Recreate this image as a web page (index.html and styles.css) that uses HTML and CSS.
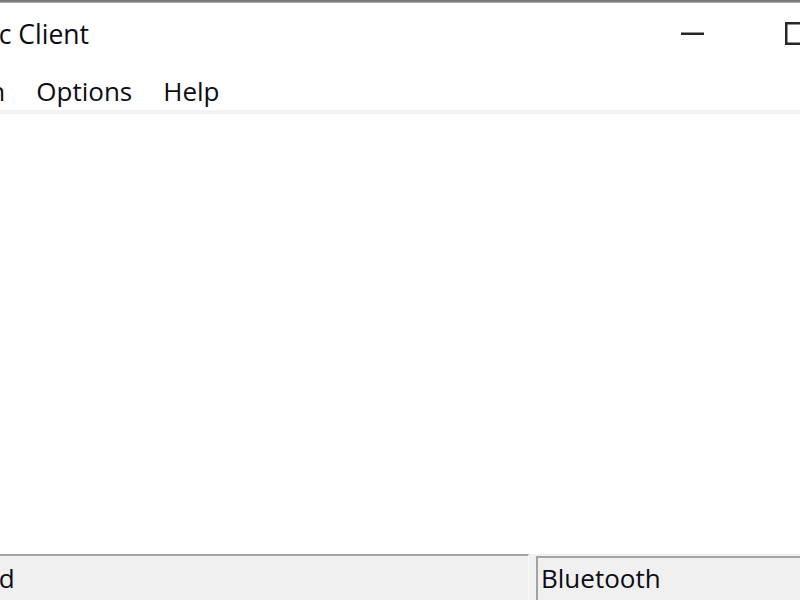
FILE: index.html
```html
<!DOCTYPE html>
<html lang="en">
<head>
  <meta charset="UTF-8">
  <title>Generic Client</title>
  <link rel="stylesheet" href="styles.css">
</head>
<body>

  <div class="window">
    <div class="frame-top"></div>

    <!-- Caption: title on the left, window buttons on the right -->
    <div class="titlebar">
      <div class="title"><span>Generic Client</span></div>
      <div class="caption-buttons">
        <div class="caption-btn">
          <svg width="23" height="23" viewBox="0 0 23 23"><rect x="0" y="10.5" width="23" height="2.5" fill="#262626"/></svg>
        </div>
        <div class="caption-btn">
          <svg width="23" height="23" viewBox="0 0 23 23"><rect x="1.25" y="1.25" width="20.5" height="20.5" fill="none" stroke="#262626" stroke-width="2.5"/></svg>
        </div>
        <div class="caption-btn">
          <svg width="23" height="23" viewBox="0 0 23 23"><path d="M1 1L22 22M22 1L1 22" stroke="#262626" stroke-width="2.5"/></svg>
        </div>
      </div>
    </div>

    <div class="menubar">
      <div class="menu-items">
        <span class="menu-item">File</span>
        <span class="menu-item">Connection</span>
        <span class="menu-item">Options</span>
        <span class="menu-item">Help</span>
      </div>
    </div>

    <div class="client"></div>

    <div class="statusbar">
      <div class="status-panel status-main"><span class="status-text">Disconnected</span></div>
      <div class="status-panel status-transport">Bluetooth</div>
    </div>
  </div>

</body>
</html>
```

FILE: styles.css
```css
html, body {
  margin: 0;
  width: 800px;
  height: 600px;
  overflow: hidden;
  background: #ffffff;
}
.window {
  width: 952px;
  height: 600px;
  display: flex;
  flex-direction: column;
  font-family: "Open Sans", "Noto Sans", sans-serif;
  font-size: 26px;
  color: #0c0c16;
  background: #ffffff;
}
.frame-top {
  height: 3px;
  background: linear-gradient(#6a6a6a, #8c8c8c 66%, #c4c4c4);
}
.titlebar {
  height: 62px;
  display: flex;
  justify-content: space-between;
}
/* title is anchored on its right edge, so a long name runs off to the left */
.title {
  width: 89px;
  display: flex;
  justify-content: flex-end;
  padding-top: 13px;
  line-height: 36px;
  font-size: 26.5px;
  white-space: nowrap;
}
.caption-buttons {
  display: flex;
}
.caption-btn {
  width: 104px;
  height: 60px;
  display: flex;
  align-items: center;
  justify-content: center;
}
.menubar {
  height: 49px;
  padding-top: 8px;
  box-sizing: border-box;
  line-height: 36px;
  border-bottom: 4px solid #f2f2f2;
}
.menu-items {
  width: 235px;
  display: flex;
  justify-content: flex-end;
  white-space: nowrap;
}
.menu-item {
  padding: 0 15.5px;
}
.client {
  flex: 1;
  background: #ffffff;
}
.statusbar {
  height: 46px;
  display: flex;
  gap: 7px;
  align-items: flex-start;
  background: #f0f0f0;
  line-height: 36px;
  white-space: nowrap;
}
.status-panel {
  height: 100%;
  box-sizing: border-box;
}
.status-main {
  width: 529px;
  border-top: 2px solid #a3a3a3;
  border-right: 1px solid #fafafa;
  padding-top: 4px;
  overflow: hidden;
}
.status-text {
  display: inline-block;
  margin-left: -150px;
}
.status-transport {
  flex: 1;
  margin-top: 2px;
  border-top: 2px solid #a3a3a3;
  border-left: 2px solid #a3a3a3;
  padding: 2px 0 0 3px;
}
```
